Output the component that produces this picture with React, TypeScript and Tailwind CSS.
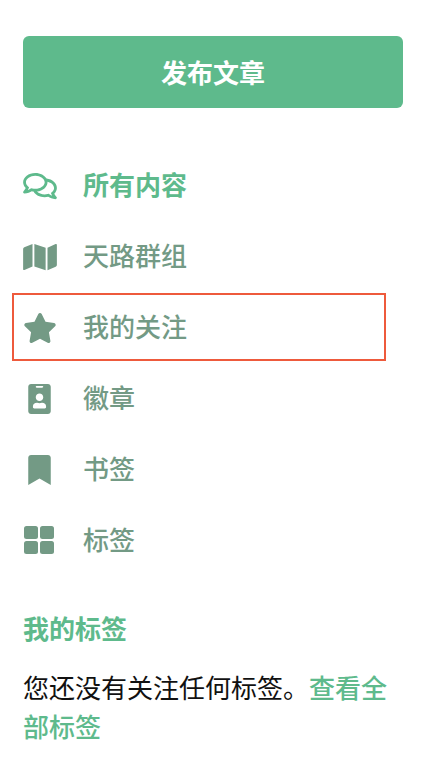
import { FaBookmark, FaIdBadge, FaMap, FaRegComments, FaStar } from 'react-icons/fa';

function GridIcon() {
  return (
    <svg viewBox="0 0 30 28" className="w-[30px] h-[28px] mb-[2px] fill-current">
      <rect x="0" y="0" width="14" height="13" rx="2.5" />
      <rect x="16" y="0" width="14" height="13" rx="2.5" />
      <rect x="0" y="15" width="14" height="13" rx="2.5" />
      <rect x="16" y="15" width="14" height="13" rx="2.5" />
    </svg>
  );
}

const items = [
  { label: '天路群组', icon: <FaMap className="w-[34px] h-[30px] shrink-0 ml-[2px]" /> },
  { label: '我的关注', icon: <FaStar className="w-[34px] h-[30px] shrink-0 ml-[2px]" />, marked: true },
  { label: '徽章', icon: <FaIdBadge className="w-[23px] h-[30px]" /> },
  { label: '书签', icon: <FaBookmark className="w-[23px] h-[30px]" /> },
  { label: '标签', icon: <GridIcon /> },
];

export default function App() {
  return (
    <div className="w-[424px] h-[772px] overflow-hidden bg-white px-[23px] pt-[36px] font-['Noto_Sans_CJK_SC',sans-serif] text-[26px]">
      <button className="w-[380px] h-[72px] pb-[2px] rounded-md bg-[#5eba8c] text-white font-bold">发布文章</button>

      <nav className="mt-[42px]">
        <a className="flex items-center h-[71px] text-[#5eba8c] font-bold">
          <span className="w-[60px] shrink-0 flex items-center">
            <FaRegComments className="w-[34px] h-[30px]" />
          </span>
          <span className="mb-[4px]">所有内容</span>
        </a>
        {items.map((item) => (
          <a key={item.label} className="relative flex items-center h-[71px] text-[#739a85] font-medium">
            <span className="w-[60px] shrink-0 flex items-center">
              <span className="w-[32px] flex justify-center">{item.icon}</span>
            </span>
            <span className="mb-[4px]">{item.label}</span>
            {item.marked && (
              <span className="absolute left-[-11px] top-[1px] w-[374px] h-[68px] border-2 border-[#ee5a3c]" />
            )}
          </a>
        ))}
      </nav>

      <h3 className="mt-[32px] h-[40px] leading-[40px] font-bold text-[#5eba8c]">我的标签</h3>
      <p className="mt-[19px] leading-[39px] text-[#111111]">
        您还没有关注任何标签。<a className="text-[#5eba8c] font-medium">查看全部标签</a>
      </p>
    </div>
  );
}
